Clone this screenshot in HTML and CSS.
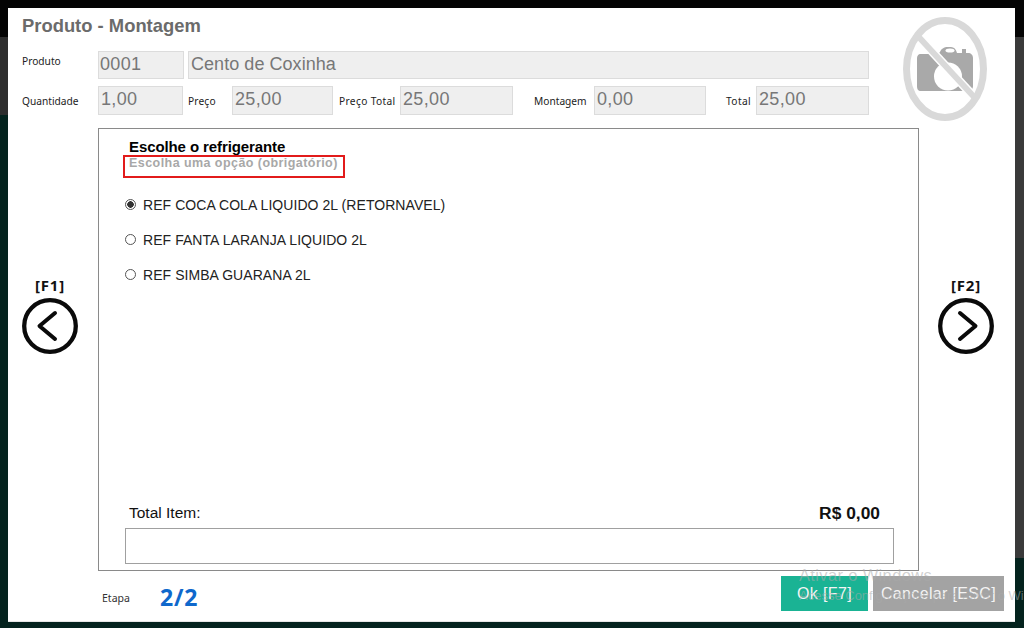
FILE: index.html
```html
<!DOCTYPE html>
<html lang="pt-BR">
<head>
<meta charset="utf-8">
<title>Produto - Montagem</title>
<link rel="stylesheet" href="styles.css">
</head>
<body>
<div class="modal">
  <header class="top">
    <div class="top-main">
      <h1 class="title">Produto - Montagem</h1>
      <div class="row row-a">
        <span class="lbl">Produto</span>
        <div class="field f-code">0001</div>
        <div class="field f-name">Cento de Coxinha</div>
      </div>
      <div class="row row-b">
        <span class="lbl l-qty">Quantidade</span>
        <div class="field f-qty">1,00</div>
        <span class="lbl l-price">Preço</span>
        <div class="field f-price">25,00</div>
        <span class="lbl l-ptotal">Preço Total</span>
        <div class="field f-ptotal">25,00</div>
        <span class="lbl l-mont">Montagem</span>
        <div class="field f-mont">0,00</div>
        <span class="lbl l-total">Total</span>
        <div class="field f-total">25,00</div>
      </div>
    </div>
    <svg class="photo" width="86" height="106" viewBox="0 0 86 106" aria-hidden="true">
      <path class="cam" d="M18 37H35L37 35C38 32 41 30 45 30H48C51 30 53 32 54 36H59V32H63V36H65C68 36 70 38 70 41V69C70 72 68 74 65 74H18C15 74 14 72 14 69V42C14 39 15 37 18 37Z"/>
      <circle class="lens" cx="45" cy="59.500" r="14"/>
      <ellipse class="lens" cx="47" cy="33.500" rx="4.500" ry="2"/>
      <path class="halo" d="M13 17 72 81"/>
      <ellipse class="ring" cx="42" cy="52" rx="38.500" ry="48.500"/>
      <path class="slash" d="M13 17 72 81"/>
    </svg>
  </header>

  <main class="middle">
    <div class="nav nav-left">
      <span class="key">[F1]</span>
      <svg width="56" height="56" viewBox="0 0 56 56" aria-hidden="true">
        <circle class="nav-ring" cx="28" cy="28" r="25.800"/>
        <path class="nav-arrow" d="M33 15 17.500 28 33 41"/>
      </svg>
    </div>
    <section class="panel">
      <h2 class="q-title">Escolhe o refrigerante</h2>
      <div class="q-sub"><span>Escolha uma opção (obrigatório)</span></div>
      <div class="options">
        <label class="opt"><span class="radio on"></span>REF COCA COLA LIQUIDO 2L (RETORNAVEL)</label>
        <label class="opt"><span class="radio"></span>REF FANTA LARANJA LIQUIDO 2L</label>
        <label class="opt"><span class="radio"></span>REF SIMBA GUARANA 2L</label>
      </div>
      <div class="sum">
        <span class="sum-l">Total Item:</span>
        <span class="sum-v">R$ 0,00</span>
      </div>
      <div class="note"></div>
    </section>
    <div class="nav nav-right">
      <span class="key">[F2]</span>
      <svg width="56" height="56" viewBox="0 0 56 56" aria-hidden="true">
        <circle class="nav-ring" cx="28" cy="28" r="25.800"/>
        <path class="nav-arrow" d="M22 15 37.500 28 22 41"/>
      </svg>
    </div>
  </main>

  <footer class="foot">
    <span class="step-l">Etapa</span>
    <span class="step-v">2/2</span>
    <button class="btn ok">Ok [F7]</button>
    <button class="btn cancel">Cancelar [ESC]</button>
  </footer>
</div>
<div class="wm">
  <div class="wm-a">Ativar o Windows</div>
  <div class="wm-b">Acesse Configurações para ativar o Windows.</div>
</div>
</body>
</html>
```
FILE: styles.css
```css
* { box-sizing: border-box; }
html, body { height: 100%; }
body {
  margin: 0;
  width: 1024px;
  height: 628px;
  overflow: hidden;
  padding: 8px 9px 6px 8px;
  font-family: "Liberation Sans", Arial, sans-serif;
  background-color: #04231e;
  background-image:
    linear-gradient(#040404 0 37px, transparent 37px),
    linear-gradient(90deg, transparent 1015px, #3a3a3a 1015px),
    linear-gradient(#2e2e2e 0 115px, transparent 115px);
  background-size: 100% 100%, 100% 558px, 100% 100%;
  background-repeat: no-repeat;
}
.modal {
  position: relative;
  height: 614px;
  background: #fff;
  padding-left: 14px;
  display: flex;
  flex-direction: column;
  border-bottom: 1px solid #e6e6e6;
}
.top { display: flex; height: 120px; }
.top-main { width: 847px; }
.title {
  margin: 0;
  height: 43px;
  padding-top: 8px;
  font-size: 18.400px;
  line-height: 20px;
  font-weight: 700;
  color: #6b6b6b;
}
.row { display: flex; align-items: center; height: 28px; }
.row-b { margin-top: 7px; height: 29px; }
.lbl {
  font-family: "Noto Sans", sans-serif;
  font-size: 10.200px;
  color: #222;
  white-space: nowrap;
}
.row-a .lbl { width: 76px; margin-top: -8px; }
.field {
  height: 100%;
  background: #efefef;
  border: 1px solid #dcdcdc;
  color: #777;
  font-size: 18px;
  line-height: 24px;
  padding-left: 2px;
  letter-spacing: .35px;
  white-space: nowrap;
}
.f-code { width: 86px; margin-right: 4px; padding-left: 1px; }
.f-name { width: 681px; letter-spacing: .05px; }
.l-qty { width: 76px; }
.f-qty { width: 85px; margin-right: 5px; }
.l-price { width: 44px; letter-spacing: .15px; }
.f-price { width: 101px; margin-right: 6px; }
.l-ptotal { width: 61px; letter-spacing: .35px; }
.f-ptotal { width: 113px; margin-right: 21px; }
.l-mont { width: 60px; }
.f-mont { width: 112px; margin-right: 20px; }
.l-total { width: 30px; letter-spacing: .4px; }
.f-total { width: 113px; }
.photo { flex: none; margin: 9px 0 0 34px; }
.cam { fill: #a9a9a9; }
.lens { fill: #fff; }
.ring { fill: none; stroke: #d9d9d9; stroke-width: 7px; }
.slash { fill: none; stroke: #d9d9d9; stroke-width: 6px; }
.halo { fill: none; stroke: #fff; stroke-width: 9px; }

.middle { display: flex; height: 443px; }
.nav {
  flex: none;
  width: 56px;
  margin-top: 148px;
  display: flex;
  flex-direction: column;
  align-items: center;
}
.nav-left { margin-right: 20px; }
.nav-right { margin-left: 19px; }
.key {
  font-family: "Noto Sans", sans-serif;
  font-weight: 700;
  font-size: 15px;
  line-height: 18px;
  letter-spacing: .8px;
  margin-bottom: 4px;
  color: #111;
}
.nav-ring { fill: none; stroke: #0a0a0a; stroke-width: 4.300px; }
.nav-arrow { fill: none; stroke: #0a0a0a; stroke-width: 4px; stroke-linecap: round; stroke-linejoin: round; }

.panel {
  flex: none;
  width: 821px;
  border: 1px solid #8a8a8a;
  padding: 9px 25px 6px 26px;
  display: flex;
  flex-direction: column;
}
.q-title {
  margin: 0;
  padding-left: 4px;
  font-size: 15px;
  line-height: 18px;
  font-weight: 700;
  color: #000;
  letter-spacing: -.1px;
}
.q-sub {
  margin-top: -1px;
  height: 23px;
  width: 222px;
  border: 2px solid #e21b1b;
  padding-left: 4px;
  font-size: 12.500px;
  line-height: 13px;
  font-weight: 700;
  letter-spacing: .44px;
  color: #a8a8a8;
  margin-left: -2px;
}
.options { margin-top: 9px; flex: 1; }
.opt {
  display: flex;
  align-items: center;
  height: 35px;
  font-size: 14px;
  letter-spacing: .06px;
  color: #222;
  white-space: nowrap;
}
.radio {
  flex: none;
  width: 11px;
  height: 11px;
  margin-right: 7px;
  border: 1px solid #555;
  border-radius: 50%;
  background: #fff;
}
.radio.on { background: radial-gradient(circle, #333 0 3px, #fff 3.500px); }
.sum {
  display: flex;
  justify-content: space-between;
  padding: 2px 13px 0 4px;
  height: 22px;
  align-items: center;
}
.sum-l { font-size: 15.500px; color: #111; }
.sum-v { font-size: 17.400px; font-weight: 700; color: #111; }
.note {
  margin-top: 5px;
  height: 36px;
  width: 769px;
  border: 1px solid #a0a0a0;
}

.foot { display: flex; align-items: center; height: 50px; padding-left: 80px; }
.step-l { font-family: "Noto Sans", sans-serif; font-size: 10.500px; color: #333; width: 58px; margin-top: 4px; }
.step-v {
  font-family: "Open Sans", sans-serif;
  font-weight: 700;
  font-size: 23px;
  color: #0f68cc;
  letter-spacing: .8px;
  width: 621px;
  margin-top: 2px;
}
.btn {
  border: 0;
  height: 35px;
  padding: 0;
  font-family: "Liberation Sans", Arial, sans-serif;
  font-size: 16px;
  color: #f4f4f4;
  letter-spacing: .35px;
  margin-top: -5px;
}
.ok { width: 87px; background: #1ab394; margin-right: 5px; }
.cancel { width: 131px; background: #a3a3a3; }

.wm {
  position: absolute;
  left: 799px;
  top: 566px;
  width: 225px;
  overflow: hidden;
  white-space: nowrap;
  pointer-events: none;
  color: rgba(170, 170, 170, .55);
}
.wm-a { font-size: 16.500px; line-height: 19px; letter-spacing: .35px; }
.wm-b { font-size: 13px; line-height: 16px; margin-top: 3px; }
```
